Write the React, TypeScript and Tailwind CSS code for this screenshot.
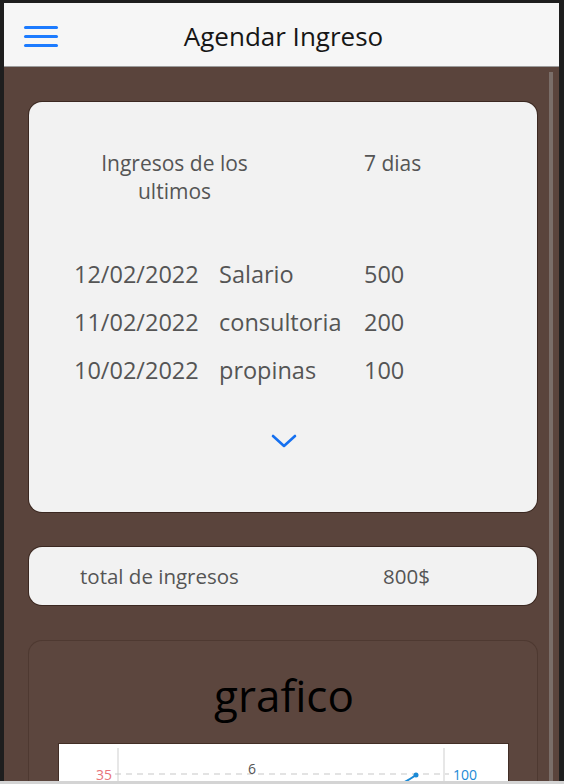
import React from "react";

const rows = [
  { d: "12/02/2022", c: "Salario", a: "500" },
  { d: "11/02/2022", c: "consultoria", a: "200" },
  { d: "10/02/2022", c: "propinas", a: "100" },
];

export default function App() {
  return (
    <div
      className="w-[564px] h-[784px] overflow-hidden bg-[#1e1e1e] flex flex-col pl-[4px] pt-[3px] pr-[5px] pb-[3px] relative"
      style={{ fontFamily: '"Open Sans", "Noto Sans", sans-serif' }}
    >
      {/* header */}
      <div className="h-[64px] shrink-0 bg-[#f6f6f6] border-b border-[#9c9c9c] flex items-center relative">
        <div className="absolute left-[20px] top-[23px] flex flex-col gap-[6px]">
          <div className="w-[34px] h-[3px] rounded-full bg-[#1c7bff]" />
          <div className="w-[34px] h-[3px] rounded-full bg-[#1c7bff]" />
          <div className="w-[34px] h-[3px] rounded-full bg-[#1c7bff]" />
        </div>
        <div className="flex-1 text-center text-[26px] text-[#161616] leading-none pl-[4px] pt-[2px]">
          Agendar Ingreso
        </div>
      </div>

      {/* body */}
      <div className="flex-1 bg-[#5a443c] relative overflow-hidden pl-[25px] pr-[22px] pt-[35px]">
        <div className="absolute right-[6px] top-[5px] bottom-0 w-[4px] bg-[#7a6e69]" />

        {/* card 1 */}
        <div className="h-[410px] rounded-[13px] bg-[#f2f2f2] shadow-[0_0_0_1px_rgba(45,28,22,0.7)] pt-[47px] text-[#555555]">
          <div className="flex pl-[45px]">
            <div className="w-[201px] text-center text-[21px] leading-[28px]">
              Ingresos de los ultimos
            </div>
            <div className="ml-[89px] text-[21px] leading-[28px]">7 dias</div>
          </div>
          <div className="mt-[46px] flex flex-col">
            {rows.map((r) => (
              <div key={r.d} className="flex pl-[45px] h-[48px] items-center text-[23.5px]">
                <div className="w-[145px]">{r.d}</div>
                <div className="w-[145px]">{r.c}</div>
                <div>{r.a}</div>
              </div>
            ))}
          </div>
          <div className="flex justify-center mt-[38px] pl-[2px]">
            <svg width="26" height="16" viewBox="0 0 26 16">
              <path d="M2 3 L13 13 L24 3" fill="none" stroke="#1570f0" strokeWidth="2.6" strokeLinecap="round" strokeLinejoin="round" />
            </svg>
          </div>
        </div>

        {/* card 2 */}
        <div className="mt-[35px] h-[58px] rounded-[13px] bg-[#f2f2f2] shadow-[0_0_0_1px_rgba(45,28,22,0.7)] flex items-center text-[20.5px] text-[#555555]">
          <div className="pl-[51px] w-[354px]">total de ingresos</div>
          <div>800$</div>
        </div>

        {/* card 3 */}
        <div className="mt-[36px] h-[200px] rounded-[13px] bg-[#5c463e] shadow-[0_0_0_1px_rgba(70,50,42,0.6)] flex flex-col items-center">
          <div className="mt-[29px] text-[44px] leading-[50px] text-black pl-[2px]">grafico</div>
          <div className="mt-[24px] w-[449px] h-[60px] bg-white shadow-[0_0_0_1px_rgba(60,40,32,0.8)]">
            <svg width="449" height="60" viewBox="0 0 449 60">
              <line x1="59" y1="4" x2="59" y2="60" stroke="#cfcfcf" strokeWidth="1" />
              <line x1="385" y1="4" x2="385" y2="60" stroke="#cfcfcf" strokeWidth="1" />
              <line x1="56" y1="30" x2="390" y2="30" stroke="#c8c8c8" strokeWidth="1.2" strokeDasharray="6 5" />
              <text x="53" y="36" textAnchor="end" fontSize="14" fill="#e8747a" fontFamily="Open Sans, sans-serif">35</text>
              <text x="394" y="36" fontSize="14" fill="#1b8ad6" fontFamily="Open Sans, sans-serif">100</text>
              <text x="193" y="30" textAnchor="middle" fontSize="14" fill="#555" fontFamily="Open Sans, sans-serif">6</text>
              <path d="M338 42 Q350 36 357 31" fill="none" stroke="#1b8ad6" strokeWidth="2" />
              <circle cx="357" cy="31" r="2.5" fill="#1b8ad6" />
            </svg>
          </div>
        </div>
      </div>
      <div className="absolute left-0 right-0 bottom-0 h-[3px] bg-[#d4d4d4]" />
    </div>
  );
}
